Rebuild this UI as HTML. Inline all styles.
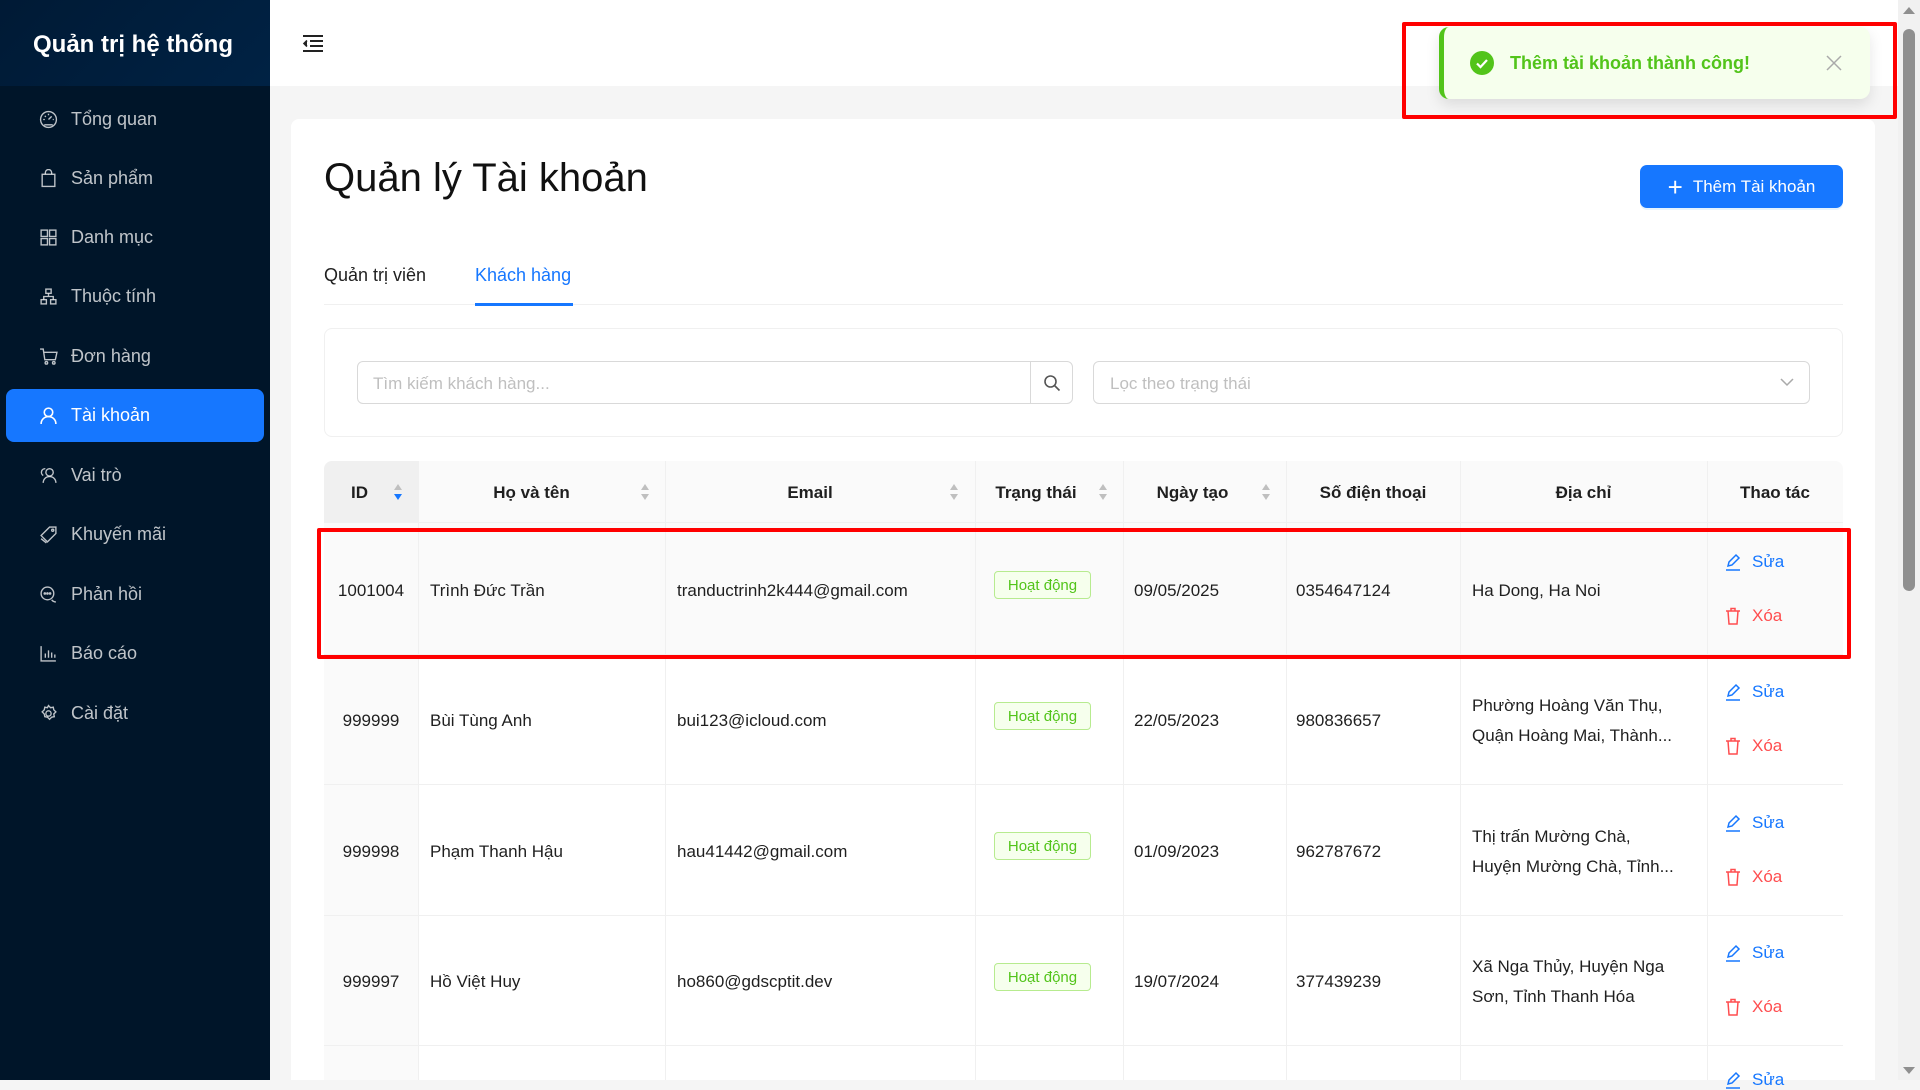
<!DOCTYPE html>
<html><head><meta charset="utf-8"><style>
*{box-sizing:border-box;margin:0;padding:0}
body{width:1920px;height:1080px;overflow:hidden;background:#f5f5f5;font-family:"Liberation Sans",sans-serif;color:rgba(0,0,0,.88);font-size:17px;position:relative}
.abs{position:absolute}
.side{left:0;top:0;width:270px;height:1080px;background:#001529}
.logo{left:0;top:0;width:270px;height:86px;background:linear-gradient(135deg,#001a35,#002244);color:#fff;font-weight:bold;font-size:24px;padding:31px 0 0 33px}
.mi{left:6px;width:258px;height:53px;color:rgba(255,255,255,.75);font-size:18px;display:flex;align-items:center;padding-left:33px;border-radius:8px}
.mi svg{width:19px;height:19px;margin-right:13px;flex:none}
.mi.act{background:#1677ff;color:#fff}
.hdr{left:270px;top:0;width:1628px;height:86px;background:#fff}
.card{left:291px;top:119px;width:1584px;height:961px;background:#fff;border-radius:8px 8px 0 0}
.th{position:absolute;top:461px;height:62px;background:#fafafa;font-weight:bold;display:flex;align-items:center;justify-content:center;border-bottom:1px solid #f0f0f0;padding-top:2px}
.sep{position:absolute;width:1px;background:#f0f0f0}
.cell{position:absolute;display:flex;align-items:center;line-height:30px;margin-top:2px}
.tag{position:absolute;width:97px;height:28px;border:1px solid #b7eb8f;background:#f6ffed;color:#52c41a;border-radius:4px;font-size:15px;display:flex;align-items:center;justify-content:center}
.act1{position:absolute;color:#1677ff;font-size:17px;display:flex;align-items:center;margin-top:2px}
.act2{position:absolute;color:#ff4d4f;font-size:17px;display:flex;align-items:center;margin-top:2px}
.sort{position:absolute;width:10px;height:18px}
</style></head><body>
<div class="abs side"></div>
<div class="abs logo">Quản trị hệ thống</div>

<div class="abs mi" style="top:93px"><svg viewBox="0 0 18 18" fill="none" stroke="currentColor" stroke-width="1.3"><circle cx="9" cy="9" r="7.5"/><path d="M9 9l3-3M4 9h1.5M13 9h1M5.5 5.5l1 1M9 3.5v1.5M5 14h8"/></svg>Tổng quan</div>
<div class="abs mi" style="top:152px"><svg viewBox="0 0 18 18" fill="none" stroke="currentColor" stroke-width="1.3"><rect x="3" y="5" width="12" height="11.5"/><path d="M6 5V3.5a3 3 0 016 0V5"/></svg>Sản phẩm</div>
<div class="abs mi" style="top:211px"><svg viewBox="0 0 18 18" fill="none" stroke="currentColor" stroke-width="1.3"><rect x="2" y="2" width="6" height="6"/><rect x="10" y="2" width="6" height="6"/><rect x="2" y="10" width="6" height="6"/><rect x="10" y="10" width="6" height="6"/></svg>Danh mục</div>
<div class="abs mi" style="top:270px"><svg viewBox="0 0 18 18" fill="none" stroke="currentColor" stroke-width="1.3"><rect x="6.5" y="2" width="5" height="4"/><rect x="2" y="12" width="5" height="4"/><rect x="11" y="12" width="5" height="4"/><path d="M9 6v3M4.5 12V9h9v3"/></svg>Thuộc tính</div>
<div class="abs mi" style="top:330px"><svg viewBox="0 0 18 18" fill="none" stroke="currentColor" stroke-width="1.3"><path d="M1 2h3l1.5 10h10L17 5H5"/><circle cx="7" cy="15" r="1.2"/><circle cx="14" cy="15" r="1.2"/></svg>Đơn hàng</div>
<div class="abs mi act" style="top:389px"><svg viewBox="0 0 18 18" fill="none" stroke="currentColor" stroke-width="1.5"><circle cx="9" cy="6" r="4"/><path d="M2 17c0-4 3-7 7-7s7 3 7 7"/></svg>Tài khoản</div>
<div class="abs mi" style="top:449px"><svg viewBox="0 0 18 18" fill="none" stroke="currentColor" stroke-width="1.3"><circle cx="10" cy="6" r="3.5"/><path d="M4 16c0-3.5 2.5-6 6-6s6 2.5 6 6M6 2.5A3.5 3.5 0 004 9"/></svg>Vai trò</div>
<div class="abs mi" style="top:508px"><svg viewBox="0 0 18 18" fill="none" stroke="currentColor" stroke-width="1.3"><path d="M10 2h6v6l-8 8-6-6zM2 13l5 4"/><circle cx="13" cy="5" r="1"/></svg>Khuyến mãi</div>
<div class="abs mi" style="top:568px"><svg viewBox="0 0 18 18" fill="none" stroke="currentColor" stroke-width="1.3"><circle cx="8" cy="8" r="6"/><path d="M12 14a5 5 0 004 2"/><circle cx="5.5" cy="8" r=".6"/><circle cx="8" cy="8" r=".6"/><circle cx="10.5" cy="8" r=".6"/></svg>Phản hồi</div>
<div class="abs mi" style="top:627px"><svg viewBox="0 0 18 18" fill="none" stroke="currentColor" stroke-width="1.3"><path d="M2 2v14h14M6 13V9M9 13V6M12 13V8M15 13v-3"/></svg>Báo cáo</div>
<div class="abs mi" style="top:687px"><svg viewBox="0 0 18 18" fill="none" stroke="currentColor" stroke-width="1.3"><circle cx="9" cy="9" r="2.5"/><path d="M9 1.5l2 2 2.5-.5.5 2.5 2 2-2 2 .5 2.5-2.5.5-2 2-2-2-2.5-.5-.5-2.5-2-2 2-2 .5-2.5 2.5.5z"/></svg>Cài đặt</div>

<div class="abs hdr"></div>
<svg class="abs" style="left:302px;top:34px" width="22" height="18" viewBox="0 0 22 18" fill="none" stroke="#222" stroke-width="2"><path d="M1 2h20M8 7h13M8 12h13M1 17h20"/><path d="M5 6.5L2 9.5l3 3" stroke-width="1.6" fill="#222"/></svg>

<div class="abs card"></div>
<div class="abs" style="left:324px;top:156px;font-size:40px;color:#111">Quản lý Tài khoản</div>
<div class="abs" style="left:1640px;top:165px;width:203px;height:43px;background:#1677ff;border-radius:7px;color:#fff;font-size:17px;display:flex;align-items:center;justify-content:center;box-shadow:0 2px 0 rgba(5,145,255,.1)"><span style="font-size:26px;font-weight:300;margin-right:10px;line-height:1">+</span>Thêm Tài khoản</div>

<div class="abs" style="left:324px;top:265px;font-size:18px">Quản trị viên</div>
<div class="abs" style="left:475px;top:265px;font-size:18px;color:#1677ff">Khách hàng</div>
<div class="abs" style="left:324px;top:304px;width:1519px;height:1px;background:#f0f0f0"></div>
<div class="abs" style="left:475px;top:303px;width:98px;height:3px;background:#1677ff"></div>

<div class="abs" style="left:324px;top:328px;width:1519px;height:109px;border:1px solid #f0f0f0;border-radius:8px"></div>
<div class="abs" style="left:357px;top:361px;width:716px;height:43px;border:1px solid #d9d9d9;border-radius:6px"></div>
<div class="abs" style="left:1030px;top:361px;width:1px;height:43px;background:#d9d9d9"></div>
<div class="abs" style="left:373px;top:374px;color:#bfbfbf;font-size:17px">Tìm kiếm khách hàng...</div>
<svg class="abs" style="left:1043px;top:374px" width="18" height="18" viewBox="0 0 18 18" fill="none" stroke="#555" stroke-width="1.6"><circle cx="7.5" cy="7.5" r="5.5"/><path d="M11.5 11.5l5 5"/></svg>
<div class="abs" style="left:1093px;top:361px;width:717px;height:43px;border:1px solid #d9d9d9;border-radius:6px"></div>
<div class="abs" style="left:1110px;top:374px;color:#bfbfbf;font-size:17px">Lọc theo trạng thái</div>
<svg class="abs" style="left:1780px;top:377px" width="14" height="10" viewBox="0 0 14 10" fill="none" stroke="#aaa" stroke-width="1.5"><path d="M1 2l6 6 6-6"/></svg>

<div class="th" style="left:324px;width:94px;background:#f0f0f0;border-radius:8px 0 0 0;justify-content:flex-start;padding-left:27px">ID</div>
<div class="th" style="left:418px;width:247px;padding-right:20px">Họ và tên</div>
<div class="th" style="left:665px;width:310px;padding-right:20px">Email</div>
<div class="th" style="left:975px;width:148px;padding-right:26px">Trạng thái</div>
<div class="th" style="left:1123px;width:163px;padding-right:24px">Ngày tạo</div>
<div class="th" style="left:1286px;width:174px">Số điện thoại</div>
<div class="th" style="left:1460px;width:247px">Địa chỉ</div>
<div class="th" style="left:1707px;width:136px;border-radius:0 8px 0 0">Thao tác</div>
<svg class="sort" style="left:393px;top:483px" viewBox="0 0 10 18"><path d="M5 1l4 6H1z" fill="#bfbfbf"/><path d="M5 17l4-6H1z" fill="#1677ff"/></svg>
<svg class="sort" style="left:640px;top:483px" viewBox="0 0 10 18"><path d="M5 1l4 6H1z" fill="#bfbfbf"/><path d="M5 17l4-6H1z" fill="#bfbfbf"/></svg>
<svg class="sort" style="left:949px;top:483px" viewBox="0 0 10 18"><path d="M5 1l4 6H1z" fill="#bfbfbf"/><path d="M5 17l4-6H1z" fill="#bfbfbf"/></svg>
<svg class="sort" style="left:1098px;top:483px" viewBox="0 0 10 18"><path d="M5 1l4 6H1z" fill="#bfbfbf"/><path d="M5 17l4-6H1z" fill="#bfbfbf"/></svg>
<svg class="sort" style="left:1261px;top:483px" viewBox="0 0 10 18"><path d="M5 1l4 6H1z" fill="#bfbfbf"/><path d="M5 17l4-6H1z" fill="#bfbfbf"/></svg>

<div class="abs" style="left:324px;top:523px;width:1519px;height:131px;background:#fafafa"></div>
<div class="abs" style="left:324px;top:654px;width:94px;height:426px;background:#fafafa"></div>
<div class="abs" style="left:324px;top:654px;width:1519px;height:1px;background:#f0f0f0"></div>
<div class="abs" style="left:324px;top:784px;width:1519px;height:1px;background:#f0f0f0"></div>
<div class="abs" style="left:324px;top:915px;width:1519px;height:1px;background:#f0f0f0"></div>
<div class="abs" style="left:324px;top:1045px;width:1519px;height:1px;background:#f0f0f0"></div>
<div class="sep" style="left:418px;top:461px;height:619px"></div>
<div class="sep" style="left:665px;top:461px;height:619px"></div>
<div class="sep" style="left:975px;top:461px;height:619px"></div>
<div class="sep" style="left:1123px;top:461px;height:619px"></div>
<div class="sep" style="left:1286px;top:461px;height:619px"></div>
<div class="sep" style="left:1460px;top:461px;height:619px"></div>
<div class="sep" style="left:1707px;top:461px;height:619px"></div>

<div class="cell" style="left:324px;width:94px;top:574px;justify-content:center">1001004</div>
<div class="cell" style="left:430px;top:574px">Trình Đức Trần</div>
<div class="cell" style="left:677px;top:574px">tranductrinh2k444@gmail.com</div>
<div class="tag" style="left:994px;top:571px">Hoạt động</div>
<div class="cell" style="left:1134px;top:574px">09/05/2025</div>
<div class="cell" style="left:1296px;top:574px">0354647124</div>
<div class="cell" style="left:1472px;top:574px">Ha Dong, Ha Noi</div>
<div class="act1" style="left:1725px;top:550px"><svg width="16" height="18" viewBox="0 0 16 18" fill="none" stroke="#1677ff" stroke-width="1.5" style="margin-right:11px"><path d="M3 13l1-4 7-7 3 3-7 7z"/><path d="M1 17h14"/></svg>Sửa</div>
<div class="act2" style="left:1725px;top:604px"><svg width="16" height="18" viewBox="0 0 16 18" fill="none" stroke="#ff4d4f" stroke-width="1.5" style="margin-right:11px"><path d="M1 4h14M6 4V1.5h4V4M3 4l1 13h8l1-13"/></svg>Xóa</div>

<div class="cell" style="left:324px;width:94px;top:704px;justify-content:center">999999</div>
<div class="cell" style="left:430px;top:704px">Bùi Tùng Anh</div>
<div class="cell" style="left:677px;top:704px">bui123@icloud.com</div>
<div class="tag" style="left:994px;top:702px">Hoạt động</div>
<div class="cell" style="left:1134px;top:704px">22/05/2023</div>
<div class="cell" style="left:1296px;top:704px">980836657</div>
<div class="cell" style="left:1472px;top:689px">Phường Hoàng Văn Thụ,</div>
<div class="cell" style="left:1472px;top:719px">Quận Hoàng Mai, Thành...</div>
<div class="act1" style="left:1725px;top:680px"><svg width="16" height="18" viewBox="0 0 16 18" fill="none" stroke="#1677ff" stroke-width="1.5" style="margin-right:11px"><path d="M3 13l1-4 7-7 3 3-7 7z"/><path d="M1 17h14"/></svg>Sửa</div>
<div class="act2" style="left:1725px;top:734px"><svg width="16" height="18" viewBox="0 0 16 18" fill="none" stroke="#ff4d4f" stroke-width="1.5" style="margin-right:11px"><path d="M1 4h14M6 4V1.5h4V4M3 4l1 13h8l1-13"/></svg>Xóa</div>

<div class="cell" style="left:324px;width:94px;top:835px;justify-content:center">999998</div>
<div class="cell" style="left:430px;top:835px">Phạm Thanh Hậu</div>
<div class="cell" style="left:677px;top:835px">hau41442@gmail.com</div>
<div class="tag" style="left:994px;top:832px">Hoạt động</div>
<div class="cell" style="left:1134px;top:835px">01/09/2023</div>
<div class="cell" style="left:1296px;top:835px">962787672</div>
<div class="cell" style="left:1472px;top:820px">Thị trấn Mường Chà,</div>
<div class="cell" style="left:1472px;top:850px">Huyện Mường Chà, Tỉnh...</div>
<div class="act1" style="left:1725px;top:811px"><svg width="16" height="18" viewBox="0 0 16 18" fill="none" stroke="#1677ff" stroke-width="1.5" style="margin-right:11px"><path d="M3 13l1-4 7-7 3 3-7 7z"/><path d="M1 17h14"/></svg>Sửa</div>
<div class="act2" style="left:1725px;top:865px"><svg width="16" height="18" viewBox="0 0 16 18" fill="none" stroke="#ff4d4f" stroke-width="1.5" style="margin-right:11px"><path d="M1 4h14M6 4V1.5h4V4M3 4l1 13h8l1-13"/></svg>Xóa</div>

<div class="cell" style="left:324px;width:94px;top:965px;justify-content:center">999997</div>
<div class="cell" style="left:430px;top:965px">Hồ Việt Huy</div>
<div class="cell" style="left:677px;top:965px">ho860@gdscptit.dev</div>
<div class="tag" style="left:994px;top:963px">Hoạt động</div>
<div class="cell" style="left:1134px;top:965px">19/07/2024</div>
<div class="cell" style="left:1296px;top:965px">377439239</div>
<div class="cell" style="left:1472px;top:950px">Xã Nga Thủy, Huyện Nga</div>
<div class="cell" style="left:1472px;top:980px">Sơn, Tỉnh Thanh Hóa</div>
<div class="act1" style="left:1725px;top:941px"><svg width="16" height="18" viewBox="0 0 16 18" fill="none" stroke="#1677ff" stroke-width="1.5" style="margin-right:11px"><path d="M3 13l1-4 7-7 3 3-7 7z"/><path d="M1 17h14"/></svg>Sửa</div>
<div class="act2" style="left:1725px;top:995px"><svg width="16" height="18" viewBox="0 0 16 18" fill="none" stroke="#ff4d4f" stroke-width="1.5" style="margin-right:11px"><path d="M1 4h14M6 4V1.5h4V4M3 4l1 13h8l1-13"/></svg>Xóa</div>
<div class="act1" style="left:1725px;top:1068px"><svg width="16" height="18" viewBox="0 0 16 18" fill="none" stroke="#1677ff" stroke-width="1.5" style="margin-right:11px"><path d="M3 13l1-4 7-7 3 3-7 7z"/><path d="M1 17h14"/></svg>Sửa</div>

<div class="abs" style="left:317px;top:528px;width:1534px;height:131px;border:4px solid #f00;border-radius:2px"></div>

<div class="abs" style="left:1402px;top:22px;width:495px;height:97px;border:4px solid #f00;border-radius:2px"></div>
<div class="abs" style="left:1439px;top:27px;width:431px;height:72px;background:#f6ffed;border-left:5px solid #52c41a;border-radius:10px;box-shadow:0 6px 14px rgba(0,0,0,.1)"></div>
<svg class="abs" style="left:1470px;top:51px" width="24" height="24" viewBox="0 0 24 24"><circle cx="12" cy="12" r="12" fill="#52c41a"/><path d="M7 12.5l3.5 3.5L17 9" fill="none" stroke="#fff" stroke-width="2.2"/></svg>
<div class="abs" style="left:1510px;top:53px;color:#52c41a;font-weight:bold;font-size:18px">Thêm tài khoản thành công!</div>
<svg class="abs" style="left:1826px;top:55px" width="16" height="16" viewBox="0 0 16 16" stroke="#aaa" stroke-width="1.5"><path d="M1 1l14 14M15 1L1 15"/></svg>

<div class="abs" style="left:1898px;top:0;width:22px;height:1080px;background:#f1f1f1"></div>
<div class="abs" style="left:1903px;top:29px;width:12px;height:562px;background:#8f8f8f;border-radius:6px"></div>
<svg class="abs" style="left:1902px;top:6px" width="14" height="9"><path d="M7 1l6 7H1z" fill="#8f8f8f"/></svg>
<svg class="abs" style="left:1902px;top:1066px" width="14" height="9"><path d="M7 8l6-7H1z" fill="#8f8f8f"/></svg>
</body></html>
